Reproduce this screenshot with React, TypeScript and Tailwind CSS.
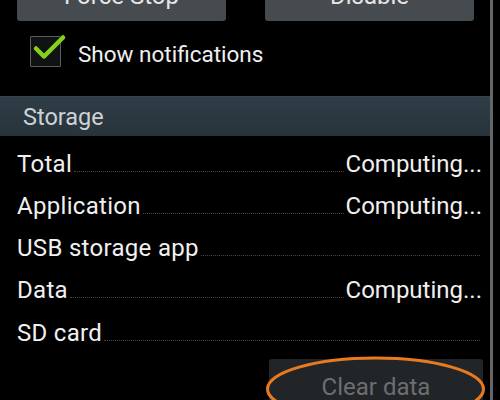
import React from "react";

const rows: { label: string; value?: string }[] = [
  { label: "Total", value: "Computing..." },
  { label: "Application", value: "Computing..." },
  { label: "USB storage app" },
  { label: "Data", value: "Computing..." },
  { label: "SD card" },
];

export default function App() {
  return (
    <div
      className="relative w-[500px] h-[400px] overflow-hidden bg-black"
      style={{ fontFamily: "Roboto, 'Noto Sans', sans-serif" }}
    >
      <div className="w-[490px]">
        {/* top buttons */}
        <div className="flex gap-[39px] pl-[17px] -mt-[27px] h-[48px]">
          <div className="w-[209px] h-full rounded-[3px] bg-[#464b4f] flex items-end justify-center pb-[13px] text-[24px] leading-[24px] text-[#e6e6e6]">
            Force Stop
          </div>
          <div className="w-[209px] h-full rounded-[3px] bg-[#464b4f] flex items-end justify-center pb-[13px] text-[24px] leading-[24px] text-[#e6e6e6]">
            Disable
          </div>
        </div>

        {/* checkbox row */}
        <div className="flex items-center pl-[30px] mt-[15px] h-[31px]">
          <div className="relative w-[31px] h-[31px] border-[1.5px] border-[#5a5d60] bg-[#101214] rounded-[1px]">
            <svg
              className="absolute -left-[1.5px] -top-[1.5px] overflow-visible"
              width="31"
              height="31"
              viewBox="0 0 31 31"
            >
              <path
                d="M6 12.5 L14 20.5 L33 1.5"
                fill="none"
                stroke="#84d21c"
                strokeWidth="4.5"
                strokeLinecap="round"
                strokeLinejoin="round"
              />
            </svg>
          </div>
          <span className="ml-[17px] mt-[4px] text-[22.5px] leading-[26px] text-[#f0f0f0]">
            Show notifications
          </span>
        </div>

        {/* storage header */}
        <div className="mt-[29px] h-[40px] border-t border-[#38474f] bg-gradient-to-b from-[#2f3d46] to-[#28343c] pl-[23px] pt-[1px] text-[23.5px] leading-[38px] text-[#cdd2d5]">
          Storage
        </div>

        {/* rows */}
        <div className="mt-[6.6px]">
          {rows.map((r) => (
            <div
              key={r.label}
              className="flex items-baseline h-[42.3px] pl-[17px] pr-[8px] text-[24px] leading-[42.3px] text-[#f0f0f0]"
            >
              <span className="tracking-[0.3px]">{r.label}</span>
              <div className="flex-1 h-[1px] mx-[2px] border-b border-dotted border-[#444444]" />
              {r.value ? <span>{r.value}</span> : null}
            </div>
          ))}
        </div>

        {/* clear data */}
        <div className="flex justify-end pr-[7px] mt-[5px]">
          <div className="w-[214px] h-[56px] rounded-[3px] bg-[#222527] text-center text-[24px] leading-[56px] text-[#6b6f72]">
            Clear data
          </div>
        </div>
      </div>

      {/* scrollbar */}
      <div className="absolute left-[490px] top-0 w-[3px] h-[400px] bg-[#666666]" />

      {/* orange annotation ellipse */}
      <svg className="absolute left-0 top-0 pointer-events-none" width="500" height="400">
        <ellipse cx="375.5" cy="389" rx="108" ry="31" fill="none" stroke="#e97a1f" strokeWidth="3" />
      </svg>
    </div>
  );
}
